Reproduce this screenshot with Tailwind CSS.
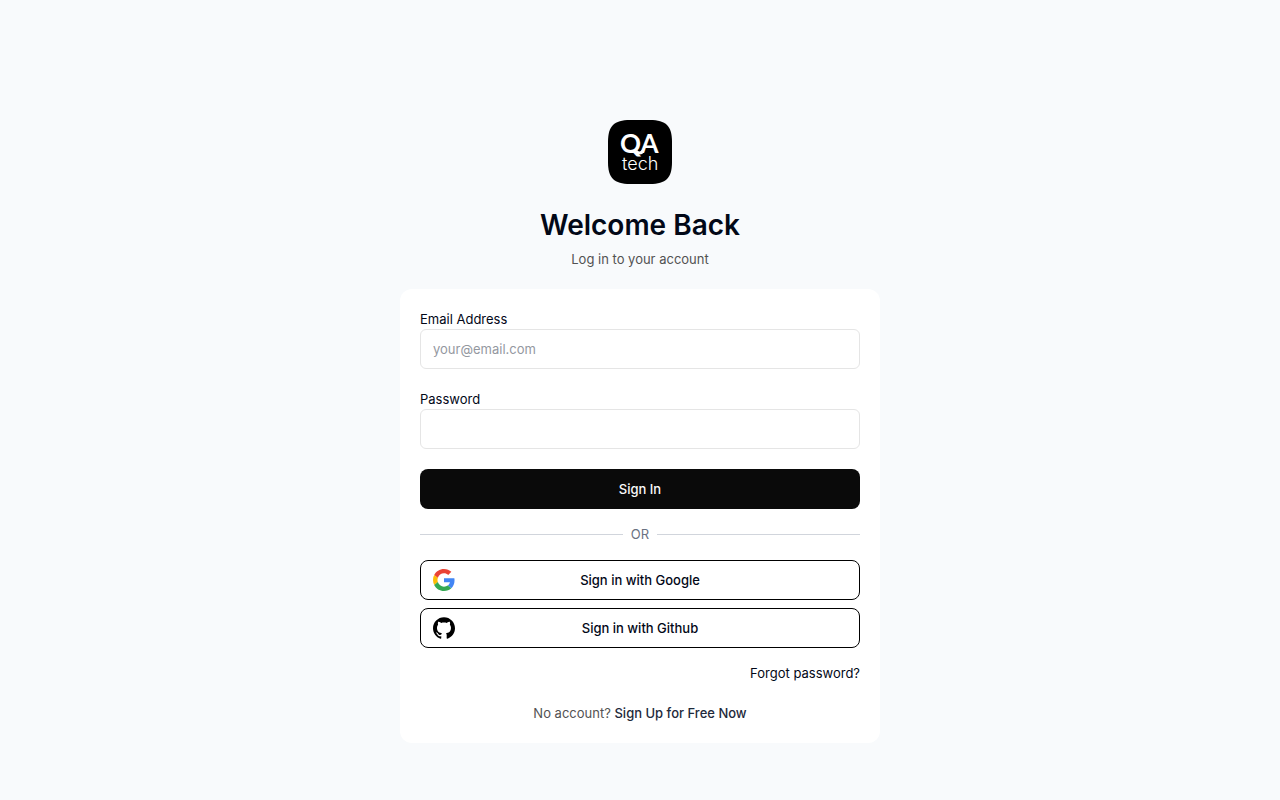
<!DOCTYPE html>
<html lang="en">
<head>
<meta charset="utf-8">
<meta name="viewport" content="width=device-width, initial-scale=1">
<title>QA.tech – Log in</title>
<script src="https://cdn.jsdelivr.net/npm/@tailwindcss/browser@4"></script>
</head>
<body class="min-h-screen bg-slate-50 font-['Inter',sans-serif] text-[13px] leading-5 text-[#020817]">
<main class="mx-auto flex w-full max-w-[480px] flex-col pt-[120px] pb-14">
  <header class="flex flex-col items-center">
    <svg class="size-16" viewBox="0 0 64 64" role="img" aria-label="QA tech">
      <path d="M0 32V22C0 6 6 0 22 0H42C58 0 64 6 64 22V42C64 58 58 64 42 64H22C6 64 0 58 0 42Z"/>
      <g fill="#fff">
        <text x="12" y="33" font-family="Lato, sans-serif" font-size="26" font-weight="700">QA</text>
        <text x="14" y="50" font-family="Inter, sans-serif" font-size="18" font-weight="300">tech</text>
      </g>
      <path d="M28 31Q32 35 35 31" fill="none" stroke="#fff" stroke-width="3"/>
    </svg>
    <h1 class="mt-[21px] text-[28px] leading-10 font-semibold">Welcome Back</h1>
    <p class="mt-1 text-[#525252]">Log in to your account</p>
  </header>

  <section class="mt-5 rounded-xl bg-white p-5">
    <form class="flex flex-col">
      <label for="email">Email Address</label>
      <input id="email" type="email" placeholder="your@email.com" class="h-10 w-full rounded-md border border-[#e5e5e5] bg-white px-3 outline-none placeholder:text-[#94989f]">
      <label for="password" class="mt-5">Password</label>
      <input id="password" type="password" class="h-10 w-full rounded-md border border-[#e5e5e5] bg-white px-3 outline-none">
      <button type="submit" class="mt-5 h-10 rounded-lg bg-[#0a0a0a] font-medium text-[#fafafa]">Sign In</button>
    </form>
    <div class="my-4 flex items-center gap-2 leading-[19px] text-gray-500">
      <span class="h-px flex-1 bg-gray-300"></span>OR<span class="h-px flex-1 bg-gray-300"></span>
    </div>
    <div class="flex flex-col gap-2">
      <button type="button" class="relative flex h-10 items-center justify-center rounded-lg border border-black bg-white leading-[19px] font-medium">
        <svg class="absolute left-3 size-[22px]" viewBox="0 0 48 48" aria-hidden="true">
          <path fill="#EA4335" d="M24 9.5c3.54 0 6.71 1.22 9.21 3.6l6.85-6.85C35.9 2.38 30.47 0 24 0 14.62 0 6.51 5.38 2.56 13.22l7.98 6.19C12.43 13.72 17.74 9.5 24 9.5z"/>
          <path fill="#4285F4" d="M46.98 24.55c0-1.57-.15-3.09-.38-4.55H24v9.02h12.94c-.58 2.96-2.26 5.48-4.78 7.18l7.73 6c4.51-4.18 7.09-10.36 7.09-17.65z"/>
          <path fill="#FBBC05" d="M10.53 28.59c-.48-1.45-.76-2.99-.76-4.59s.27-3.14.76-4.59l-7.98-6.19C.92 16.46 0 20.12 0 24s.92 7.54 2.56 10.78l7.97-6.19z"/>
          <path fill="#34A853" d="M24 48c6.48 0 11.93-2.13 15.89-5.81l-7.73-6c-2.15 1.45-4.92 2.3-8.16 2.3-6.26 0-11.57-4.22-13.47-9.91l-7.98 6.19C6.51 42.62 14.62 48 24 48z"/>
        </svg>
        Sign in with Google
      </button>
      <button type="button" class="relative flex h-10 items-center justify-center rounded-lg border border-black bg-white leading-[19px] font-medium">
        <svg class="absolute left-3 size-[22px]" viewBox="0 0 24 24" aria-hidden="true">
          <path d="M12 .297c-6.63 0-12 5.373-12 12 0 5.303 3.438 9.8 8.205 11.385.6.113.82-.258.82-.577 0-.285-.01-1.04-.015-2.04-3.338.724-4.042-1.61-4.042-1.61C4.422 18.07 3.633 17.7 3.633 17.7c-1.087-.744.084-.729.084-.729 1.205.084 1.838 1.236 1.838 1.236 1.07 1.835 2.809 1.305 3.495.998.108-.776.417-1.305.76-1.605-2.665-.3-5.466-1.332-5.466-5.93 0-1.31.465-2.38 1.235-3.22-.135-.303-.54-1.523.105-3.176 0 0 1.005-.322 3.3 1.23.96-.267 1.98-.399 3-.405 1.02.006 2.04.138 3 .405 2.28-1.552 3.285-1.23 3.285-1.23.645 1.653.24 2.873.12 3.176.765.84 1.23 1.91 1.23 3.22 0 4.61-2.805 5.625-5.475 5.92.42.36.81 1.096.81 2.22 0 1.606-.015 2.896-.015 3.286 0 .315.21.69.825.57C20.565 22.092 24 17.592 24 12.297c0-6.627-5.373-12-12-12"/>
        </svg>
        Sign in with Github
      </button>
    </div>
    <div class="mt-4 text-right leading-[19px]"><a href="#">Forgot password?</a></div>
    <p class="mt-5 text-center text-[#525252]">No account? <a href="#" class="font-medium text-[#1e293b]">Sign Up for Free Now</a></p>
  </section>
</main>
</body>
</html>
